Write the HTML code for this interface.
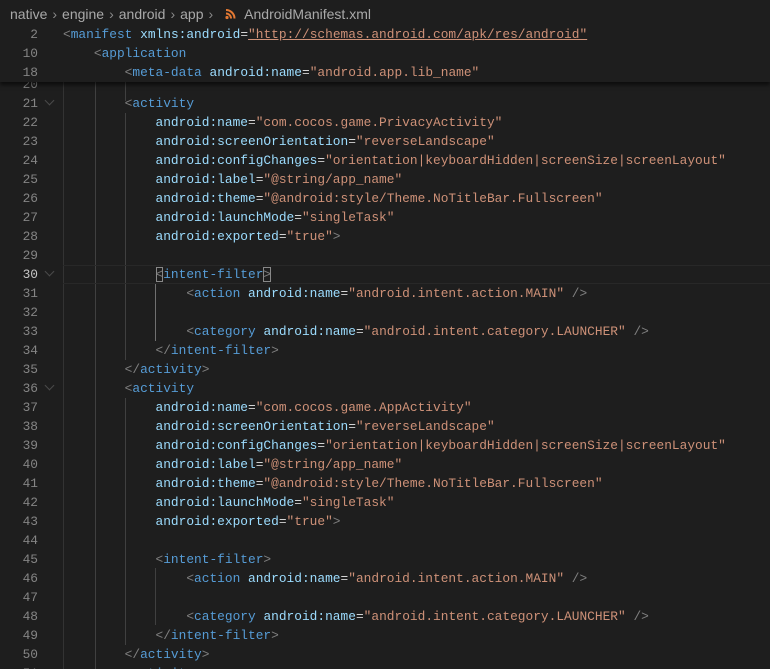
<!DOCTYPE html>
<html><head><meta charset="utf-8"><style>
*{margin:0;padding:0;box-sizing:border-box}
html,body{width:770px;height:669px;overflow:hidden}
body{background:#1e1e1e;position:relative;font-family:"Liberation Mono",monospace;font-size:12.85px}
.bc{position:absolute;left:0;top:0;width:770px;height:25px;background:#1e1e1e;font-family:"Liberation Sans",sans-serif;font-size:14px;color:#a9a9a9;line-height:28px;padding-left:10px;white-space:nowrap;z-index:5}
.bc .s{color:#8a8a8a;margin:0 5px}
.ln{position:absolute;left:0;width:38px;text-align:right;color:#858585;height:19px;line-height:19px}
.cd{position:absolute;left:63px;height:19px;line-height:19px;white-space:pre;color:#d4d4d4}
.t{color:#569cd6}.p{color:#808080}.a{color:#9cdcfe}.s2{color:#ce9178}.e{color:#d4d4d4}
.g{position:absolute;width:1px;background:#404040}
.sticky{position:absolute;left:0;top:25px;width:770px;height:57px;background:#1e1e1e;z-index:4;box-shadow:0 3px 4px rgba(0,0,0,.6)}
.fold{position:absolute;left:46px;width:7px;height:7px;border-right:1px solid #4a4a4a;border-bottom:1px solid #4a4a4a;transform:rotate(45deg)}
</style></head><body>
<div class="bc">native<span class="s">›</span>engine<span class="s">›</span>android<span class="s">›</span>app<span class="s">›</span><svg width="14" height="12" viewBox="0 0 14 12" style="vertical-align:-1px;margin:0 6px 0 6px"><circle cx="3" cy="9.5" r="1.6" fill="#e37933"/><path d="M2 5.5a5 5 0 0 1 5 5M2 2a8.5 8.5 0 0 1 8.5 8.5" stroke="#e37933" stroke-width="2" fill="none"/></svg>AndroidManifest.xml</div>

<div class="sticky">
<div class="ln" style="top:0">2</div><div class="cd" style="top:0"><span class="p">&lt;</span><span class="t">manifest</span> <span class="a">xmlns:android</span><span class="e">=</span><span class="s2" style="text-decoration:underline">"http://schemas.android.com/apk/res/android"</span></div>
<div class="ln" style="top:19px">10</div><div class="cd" style="top:19px">    <span class="p">&lt;</span><span class="t">application</span></div>
<div class="ln" style="top:38px">18</div><div class="cd" style="top:38px">        <span class="p">&lt;</span><span class="t">meta-data</span> <span class="a">android:name</span><span class="e">=</span><span class="s2">"android.app.lib_name"</span></div>
</div>

<div class="g" style="left:63px;top:82px;height:587px;background:#333"></div>
<div class="g" style="left:95px;top:82px;height:587px"></div>
<div class="g" style="left:125px;top:82px;height:19px"></div>
<div class="g" style="left:125px;top:113px;height:247px"></div>
<div class="g" style="left:125px;top:398px;height:247px"></div>
<div class="g" style="left:155px;top:284px;height:57px;background:#707070"></div>
<div class="g" style="left:155px;top:568px;height:57px"></div>

<div style="position:absolute;left:63px;top:265px;width:707px;height:19px;border-top:1px solid #282828;border-bottom:1px solid #282828"></div>

<div class="ln" style="top:75px">20</div>
<div class="ln" style="top:94px">21</div><div class="fold" style="top:97px"></div><div class="cd" style="top:94px">        <span class="p">&lt;</span><span class="t">activity</span></div>
<div class="ln" style="top:113px">22</div><div class="cd" style="top:113px">            <span class="a">android:name</span><span class="e">=</span><span class="s2">"com.cocos.game.PrivacyActivity"</span></div>
<div class="ln" style="top:132px">23</div><div class="cd" style="top:132px">            <span class="a">android:screenOrientation</span><span class="e">=</span><span class="s2">"reverseLandscape"</span></div>
<div class="ln" style="top:151px">24</div><div class="cd" style="top:151px">            <span class="a">android:configChanges</span><span class="e">=</span><span class="s2">"orientation|keyboardHidden|screenSize|screenLayout"</span></div>
<div class="ln" style="top:170px">25</div><div class="cd" style="top:170px">            <span class="a">android:label</span><span class="e">=</span><span class="s2">"@string/app_name"</span></div>
<div class="ln" style="top:189px">26</div><div class="cd" style="top:189px">            <span class="a">android:theme</span><span class="e">=</span><span class="s2">"@android:style/Theme.NoTitleBar.Fullscreen"</span></div>
<div class="ln" style="top:208px">27</div><div class="cd" style="top:208px">            <span class="a">android:launchMode</span><span class="e">=</span><span class="s2">"singleTask"</span></div>
<div class="ln" style="top:227px">28</div><div class="cd" style="top:227px">            <span class="a">android:exported</span><span class="e">=</span><span class="s2">"true"</span><span class="p">&gt;</span></div>
<div class="ln" style="top:246px">29</div>
<div class="ln" style="top:265px;color:#c6c6c6">30</div><div class="fold" style="top:268px"></div><div class="cd" style="top:265px">            <span class="p" style="outline:1px solid #888;outline-offset:-1px">&lt;</span><span class="t">intent-filter</span><span class="p" style="outline:1px solid #888;outline-offset:-1px">&gt;</span></div>
<div class="ln" style="top:284px">31</div><div class="cd" style="top:284px">                <span class="p">&lt;</span><span class="t">action</span> <span class="a">android:name</span><span class="e">=</span><span class="s2">"android.intent.action.MAIN"</span> <span class="p">/&gt;</span></div>
<div class="ln" style="top:303px">32</div>
<div class="ln" style="top:322px">33</div><div class="cd" style="top:322px">                <span class="p">&lt;</span><span class="t">category</span> <span class="a">android:name</span><span class="e">=</span><span class="s2">"android.intent.category.LAUNCHER"</span> <span class="p">/&gt;</span></div>
<div class="ln" style="top:341px">34</div><div class="cd" style="top:341px">            <span class="p">&lt;/</span><span class="t">intent-filter</span><span class="p">&gt;</span></div>
<div class="ln" style="top:360px">35</div><div class="cd" style="top:360px">        <span class="p">&lt;/</span><span class="t">activity</span><span class="p">&gt;</span></div>
<div class="ln" style="top:379px">36</div><div class="fold" style="top:382px"></div><div class="cd" style="top:379px">        <span class="p">&lt;</span><span class="t">activity</span></div>
<div class="ln" style="top:398px">37</div><div class="cd" style="top:398px">            <span class="a">android:name</span><span class="e">=</span><span class="s2">"com.cocos.game.AppActivity"</span></div>
<div class="ln" style="top:417px">38</div><div class="cd" style="top:417px">            <span class="a">android:screenOrientation</span><span class="e">=</span><span class="s2">"reverseLandscape"</span></div>
<div class="ln" style="top:436px">39</div><div class="cd" style="top:436px">            <span class="a">android:configChanges</span><span class="e">=</span><span class="s2">"orientation|keyboardHidden|screenSize|screenLayout"</span></div>
<div class="ln" style="top:455px">40</div><div class="cd" style="top:455px">            <span class="a">android:label</span><span class="e">=</span><span class="s2">"@string/app_name"</span></div>
<div class="ln" style="top:474px">41</div><div class="cd" style="top:474px">            <span class="a">android:theme</span><span class="e">=</span><span class="s2">"@android:style/Theme.NoTitleBar.Fullscreen"</span></div>
<div class="ln" style="top:493px">42</div><div class="cd" style="top:493px">            <span class="a">android:launchMode</span><span class="e">=</span><span class="s2">"singleTask"</span></div>
<div class="ln" style="top:512px">43</div><div class="cd" style="top:512px">            <span class="a">android:exported</span><span class="e">=</span><span class="s2">"true"</span><span class="p">&gt;</span></div>
<div class="ln" style="top:531px">44</div>
<div class="ln" style="top:550px">45</div><div class="cd" style="top:550px">            <span class="p">&lt;</span><span class="t">intent-filter</span><span class="p">&gt;</span></div>
<div class="ln" style="top:569px">46</div><div class="cd" style="top:569px">                <span class="p">&lt;</span><span class="t">action</span> <span class="a">android:name</span><span class="e">=</span><span class="s2">"android.intent.action.MAIN"</span> <span class="p">/&gt;</span></div>
<div class="ln" style="top:588px">47</div>
<div class="ln" style="top:607px">48</div><div class="cd" style="top:607px">                <span class="p">&lt;</span><span class="t">category</span> <span class="a">android:name</span><span class="e">=</span><span class="s2">"android.intent.category.LAUNCHER"</span> <span class="p">/&gt;</span></div>
<div class="ln" style="top:626px">49</div><div class="cd" style="top:626px">            <span class="p">&lt;/</span><span class="t">intent-filter</span><span class="p">&gt;</span></div>
<div class="ln" style="top:645px">50</div><div class="cd" style="top:645px">        <span class="p">&lt;/</span><span class="t">activity</span><span class="p">&gt;</span></div>
<div class="ln" style="top:664px">51</div><div class="cd" style="top:664px">        <span class="p">&lt;</span><span class="t">activity</span></div>
</body></html>
